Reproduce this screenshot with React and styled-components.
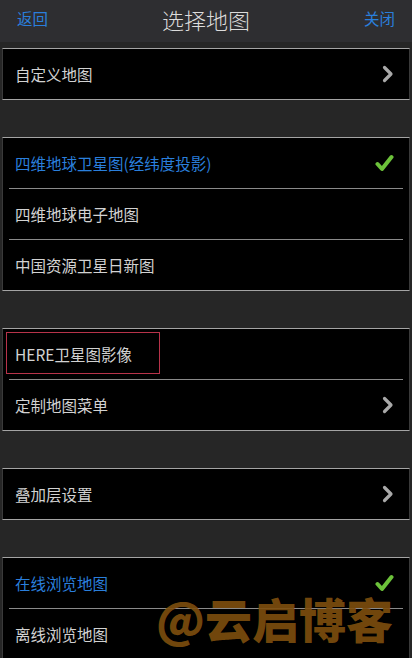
import React from "react"
import styled, { createGlobalStyle } from "styled-components"

const GlobalStyle = createGlobalStyle`
  html, body {
    margin: 0;
    padding: 0;
    background: #262626;
    font-family: "Noto Sans CJK SC", "Noto Sans", sans-serif;
  }
`

const groups = [
  [{ label: "自定义地图", chevron: true }],
  [
    { label: "四维地球卫星图(经纬度投影)", active: true },
    { label: "四维地球电子地图" },
    { label: "中国资源卫星日新图" },
  ],
  [
    { label: "HERE卫星图影像", marked: true },
    { label: "定制地图菜单", chevron: true },
  ],
  [{ label: "叠加层设置", chevron: true }],
  [
    { label: "在线浏览地图", active: true },
    { label: "离线浏览地图" },
  ],
]

const Chevron = () => (
  <svg width="12" height="18" viewBox="0 0 12 18">
    <polyline points="2.5,2.5 9,9 2.5,15.5" fill="none" stroke="#a9a9a9" strokeWidth="3.2" strokeLinecap="round" strokeLinejoin="round" />
  </svg>
)

const Check = () => (
  <svg width="19" height="19" viewBox="0 0 19 19">
    <polyline points="2.5,10 7,15 16.5,3" fill="none" stroke="#6cc23a" strokeWidth="4" strokeLinecap="round" strokeLinejoin="round" />
  </svg>
)

export default function App() {
  return (
    <Page>
      <GlobalStyle />
      <Header>
        <NavButton>返回</NavButton>
        <Title>选择地图</Title>
        <NavButton>关闭</NavButton>
      </Header>
      <Content>
        {groups.map((rows, gi) => (
          <Group key={gi}>
            {rows.map((row, ri) => (
              <Row key={ri} first={ri === 0}>
                <Label active={row.active}>{row.label}</Label>
                {row.chevron && <Chevron />}
                {row.active && <Check />}
                {row.marked && <Highlight />}
              </Row>
            ))}
          </Group>
        ))}
      </Content>
      <Watermark>@云启博客</Watermark>
    </Page>
  )
}

const Page = styled.div`
  position: relative;
  width: 412px;
  height: 658px;
  overflow: hidden;
  background: #262626;
`

const Header = styled.div`
  height: 42px;
  background: #2e2e31;
  display: flex;
  align-items: center;
  justify-content: space-between;
  padding: 0 17px;
`

const NavButton = styled.div`
  color: #2a7fdc;
  font-size: 15.5px;
  line-height: 1;
  padding-bottom: 4px;
`

const Title = styled.div`
  color: #dcdcdc;
  font-size: 22px;
  font-weight: 300;
  line-height: 1;
  padding-bottom: 4px;
`

const Content = styled.div`
  display: flex;
  flex-direction: column;
  gap: 37px;
  padding: 6px 2px 0;
`

const Group = styled.div`
  background: #000;
  border-top: 1px solid #a4a4a4;
  border-bottom: 1px solid #a4a4a4;
  border-left: 1px solid #3a3a3a;
  border-right: 1px solid #3a3a3a;
`

const Row = styled.div`
  position: relative;
  height: 50px;
  display: flex;
  align-items: center;
  justify-content: space-between;
  border-top: ${p => (p.first ? "none" : "1px solid #8a8a8a")};
  margin: 0 6px;
  padding: 0 9px 0 6px;
`

const Label = styled.span`
  color: ${p => (p.active ? "#2a7fdc" : "#d2d2d2")};
  font-size: 15.5px;
`

const Highlight = styled.div`
  position: absolute;
  left: -3px;
  top: 3px;
  width: 154px;
  height: 42px;
  border: 1px solid #b8334a;
  box-sizing: border-box;
`

const Watermark = styled.div`
  position: absolute;
  left: 156px;
  top: 594px;
  color: rgba(125, 78, 14, 0.92);
  font-size: 47px;
  font-weight: 900;
  line-height: 1;
  letter-spacing: 0px;
  pointer-events: none;
`
